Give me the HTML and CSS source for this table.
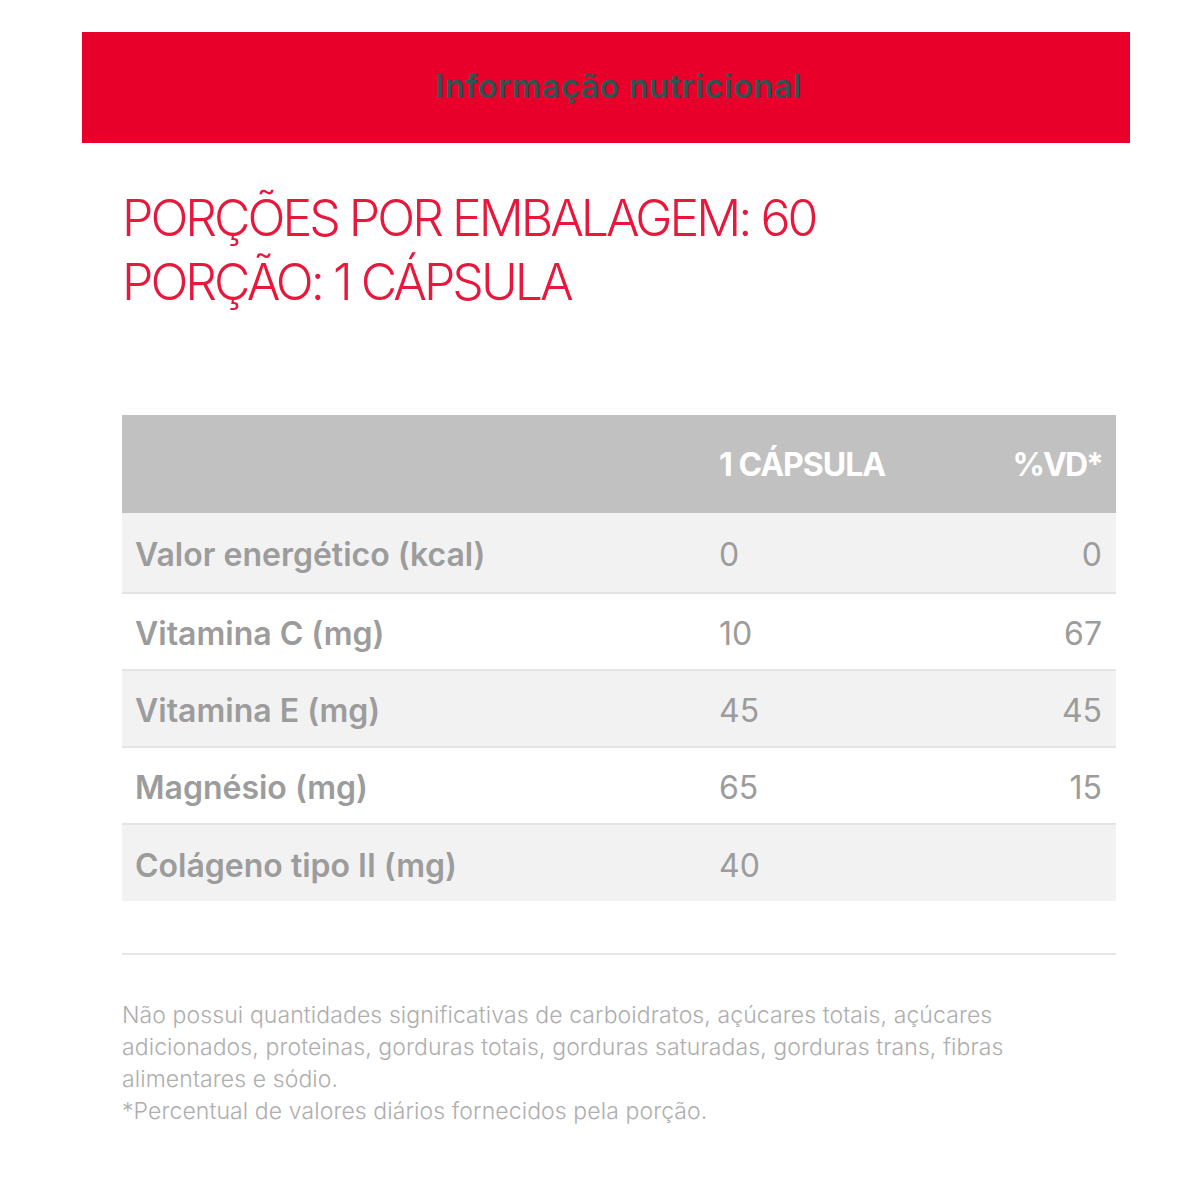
FILE: index.html
```html
<!DOCTYPE html>
<html lang="pt-BR">
<head>
<meta charset="utf-8">
<title>Informação nutricional</title>
<link rel="stylesheet" href="styles.css">
</head>
<body>
<div class="page">
  <div class="banner"><h1 class="banner-title">Informação nutricional</h1></div>
  <div class="content">
    <div class="portions">
      <div class="portions-line">PORÇÕES POR EMBALAGEM: 60</div>
      <div class="portions-line">PORÇÃO: 1 CÁPSULA</div>
    </div>
    <table class="nutri">
      <thead>
        <tr><th class="c-name"></th><th class="c-val">1 CÁPSULA</th><th class="c-vd">%VD*</th></tr>
      </thead>
      <tbody>
        <tr class="odd"><td class="c-name">Valor energético (kcal)</td><td class="c-val">0</td><td class="c-vd">0</td></tr>
        <tr><td class="c-name">Vitamina C (mg)</td><td class="c-val">10</td><td class="c-vd">67</td></tr>
        <tr class="odd"><td class="c-name">Vitamina E (mg)</td><td class="c-val">45</td><td class="c-vd">45</td></tr>
        <tr><td class="c-name">Magnésio (mg)</td><td class="c-val">65</td><td class="c-vd">15</td></tr>
        <tr class="odd"><td class="c-name">Colágeno tipo II (mg)</td><td class="c-val">40</td><td class="c-vd"></td></tr>
      </tbody>
    </table>
    <div class="rule"></div>
    <div class="notes">
      <p class="note">Não possui quantidades significativas de carboidratos, açúcares totais, açúcares<br>adicionados, proteinas, gorduras totais, gorduras saturadas, gorduras trans, fibras<br>alimentares e sódio.</p>
      <p class="note">*Percentual de valores diários fornecidos pela porção.</p>
    </div>
  </div>
</div>
</body>
</html>
```

FILE: styles.css
```css
html, body {
  margin: 0;
  padding: 0;
  background: #ffffff;
}
body {
  font-family: Inter, "Noto Sans", "Liberation Sans", sans-serif;
}
.page {
  width: 1048px;
  margin-left: 82px;
  padding-top: 32px;
}
.banner {
  height: 111px;
  background: #e8002a;
  display: flex;
  align-items: center;
  justify-content: center;
}
.banner-title {
  margin: 0;
  font-size: 32px;
  font-weight: 600;
  letter-spacing: 0.8px;
  color: #2b5653;
  padding-left: 26px;
  padding-bottom: 2px;
}
.content {
  padding: 0 14px 0 40px;
}
.portions {
  margin-top: 43px;
  color: #e8173c;
  font-size: 50px;
  font-weight: 300;
  line-height: 64px;
  letter-spacing: -3px;
}
.nutri {
  margin-top: 101px;
  width: 100%;
  border-collapse: collapse;
  color: #9c9c9c;
  font-size: 32px;
  letter-spacing: 0;
}
.nutri thead tr {
  background: #c1c1c1;
  height: 98px;
}
.nutri th {
  color: #ffffff;
  font-weight: 700;
  text-align: left;
  padding: 0;
  letter-spacing: -1px;
}
.nutri th.c-vd {
  letter-spacing: -2px;
  padding-right: 14px;
}
.nutri tbody tr {
  height: 77px;
  border-top: 2px solid #e4e4e4;
}
.nutri tbody tr:first-child {
  border-top: none;
  height: 80px;
}
.nutri tbody tr.odd {
  background: #f2f2f2;
}
.nutri td {
  padding: 4px 0 0 0;
  font-weight: 600;
}
.nutri .c-name {
  padding-left: 13px;
  width: 584px;
}
.nutri td.c-val {
  font-weight: 400;
}
.nutri td.c-vd {
  font-weight: 400;
}
.nutri .c-vd {
  text-align: right;
  padding-right: 14px;
}
.rule {
  margin-top: 52px;
  height: 2px;
  background: #e6e6e6;
}
.notes {
  margin-top: 44px;
}
.note {
  margin: 0;
  font-size: 23px;
  font-weight: 300;
  line-height: 32px;
  letter-spacing: 0.1px;
  color: #aeaeae;
}
```
